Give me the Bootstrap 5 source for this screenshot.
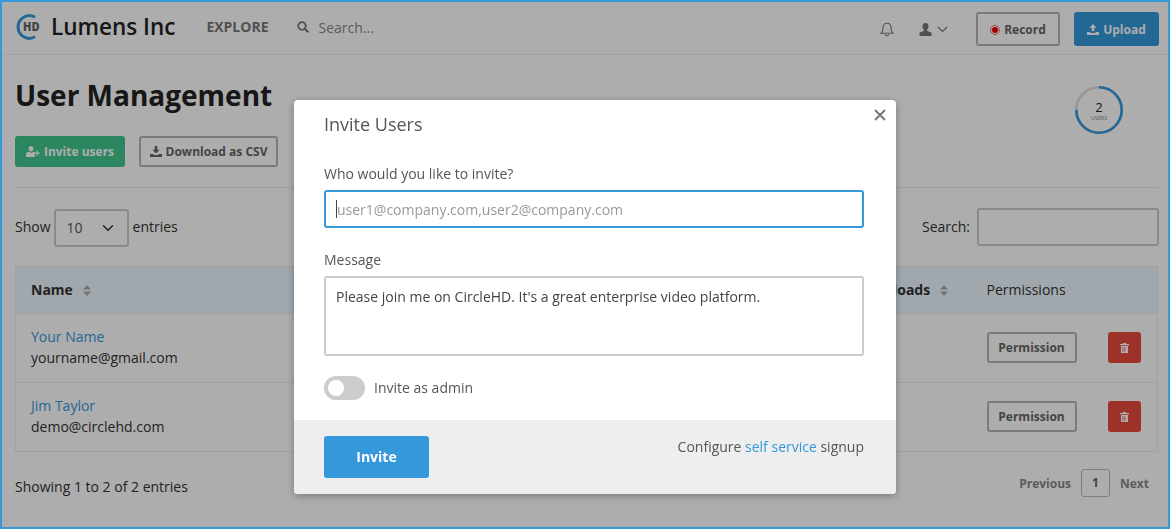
<!DOCTYPE html>
<html lang="en">
<head>
    <meta charset="UTF-8">
    <meta name="viewport" content="width=device-width, initial-scale=1.0">
    <title>User Management</title>
    <link href="https://cdn.jsdelivr.net/npm/bootstrap@5.3.0/dist/css/bootstrap.min.css" rel="stylesheet">
    <style>
        body {
            font-family: "Open Sans", "Liberation Sans", sans-serif;
            font-size: 14px;
            color: #333;
            background: #fff;
            overflow: hidden;
        }
        .app-frame {
            height: 529px;
            border: 2px solid #3498db;
            overflow: hidden;
        }
        .top-bar {
            height: 53px;
            border-bottom: 1px solid #eee;
            padding: 10px 9px 0 13px;
        }
        .brand-name { font-size: 22.5px; font-weight: 600; line-height: 32px; color: #222; margin-left: 10px; margin-top: -1px; }
        .explore-link { font-size: 14px; font-weight: 700; color: #777; margin-left: 31px; margin-top: -1px; }
        .search-icon { margin-left: 28px; margin-top: -1px; }
        .search-hint { font-size: 14px; color: #888; margin-left: 10px; margin-top: 0; }
        .bar-icon { display: block; }
        .btn-line {
            --bs-btn-color: #666;
            --bs-btn-border-color: #b5b5b5;
            --bs-btn-border-width: 2px;
            --bs-btn-font-size: 12px;
            --bs-btn-font-weight: 700;
            --bs-btn-border-radius: 3px;
            --bs-btn-padding-y: 0;
            --bs-btn-padding-x: 0;
            font-family: inherit;
        }
        .btn-solid {
            --bs-btn-color: #fff;
            --bs-btn-border-width: 0;
            --bs-btn-font-size: 12px;
            --bs-btn-font-weight: 700;
            --bs-btn-border-radius: 3px;
            --bs-btn-padding-y: 0;
            --bs-btn-padding-x: 0;
        }
        .btn-record { width: 84px; height: 34px; margin-left: 28px; padding-top: 1px; }
        .btn-upload { width: 85px; height: 34px; margin-left: 14px; padding-top: 1px; --bs-btn-bg: #3498db; --bs-btn-border-color: #3498db; }
        .page-body { padding: 0 9px 0 13px; }
        .page-title { font-size: 28px; font-weight: 700; color: #222; line-height: 38px; margin: 21px 0 0; }
        .users-ring { position: absolute; left: 1072px; top: 83px; width: 50px; height: 50px; }
        .action-row { margin-top: 22px; padding-bottom: 20px; border-bottom: 1px solid #eee; }
        .btn-invite { width: 110px; height: 31px; --bs-btn-bg: #42c78f; --bs-btn-border-color: #42c78f; }
        .btn-csv { width: 139px; height: 31px; margin-left: 14px; --bs-btn-color: #666; }
        .entries-row { margin-top: 20px; height: 38px; }
        .entries-row > span, .entries-row > label { margin-top: -2px; }
        .entries-row > label .entries-search { margin-top: 2px; }
        .entries-select { width: 75px; height: 38px; margin: 2px 4px 0 3px; border: 2px solid #ccc; border-radius: 3px; font-size: 14px; color: #555; padding: 0 0 2px 11px; background-position: right 11px center; }
        .entries-search { width: 182px; height: 38px; margin-left: 7px; border: 2px solid #ccc; border-radius: 3px; }
        .users-table { margin-top: 20px; margin-bottom: 0; border: 1px solid #eee; table-layout: fixed; width: 1143px; font-size: 14px; color: #333; }
        .users-table th, .users-table td { padding: 0 0 1px 15px; vertical-align: middle; border-bottom: 1px solid #eee; }
        .users-table thead th { height: 47px; padding-bottom: 2px; background: #ecf8ff; font-weight: 400; color: #333; }
        .users-table tbody tr { height: 69px; }
        .users-table thead th.sort-head { font-weight: 700; }
        .users-table td.who-cell { padding-bottom: 2px; }
        .sort-mark { display: inline-block; margin-left: 6px; vertical-align: -1px; }
        .user-name { color: #3498db; display: block; line-height: 21px; }
        .user-mail { display: block; line-height: 21px; }
        .btn-perm { width: 90px; height: 31px; padding-top: 1px; }
        .btn-trash { width: 33px; height: 31px; --bs-btn-bg: #e74c3c; --bs-btn-border-color: #e74c3c; margin-left: 31px; }
        .foot-row { margin-top: 17px; height: 28px; padding-right: 10px; }
        .foot-count { padding-top: 6px; }
        .page-link-text { font-size: 12px; font-weight: 700; color: #888; padding-top: 1px; }
        .page-current { width: 29px; height: 28px; margin: 0 10px; border: 1px solid #bbb; border-radius: 3px; font-size: 12px; font-weight: 700; color: #666; }

        .modal-backdrop.dim-layer { top: 2px; left: 2px; right: 2px; bottom: 2px; width: auto; height: auto; background: #000; opacity: .32; }
        .invite-dialog { max-width: 602px; width: 602px; margin: 100px 0 0 294px; }
        .invite-card { border: 0; border-radius: 4px; box-shadow: 0 2px 8px rgba(0,0,0,.3); color: #555; }
        .invite-main { padding: 0 32px 0 30px; height: 320px; }
        .invite-title { font-size: 18px; font-weight: 400; line-height: 24px; margin: 12px 0 0; color: #555; }
        .invite-close { position: absolute; top: 7px; right: 8px; width: 16px; height: 16px; padding: 0; border: 0; background: none; }
        .field-label { font-size: 14px; line-height: 20px; margin: 0 0 6px; color: #555; }
        .who-label { margin-top: 28px; }
        .msg-label { margin-top: 22px; }
        .field-wrap { position: relative; }
        .invite-input, .invite-input:focus { height: 38px; border: 2px solid #3498db; border-radius: 3px; box-shadow: none; font-size: 14px; padding: 0 11px; font-family: inherit; }
        .invite-input::placeholder { color: #999; opacity: 1; }
        .text-caret { position: absolute; left: 12px; top: 10px; width: 1px; height: 18px; background: #444; }
        .invite-area, .invite-area:focus { height: 80px; border: 2px solid #ccc; border-radius: 3px; box-shadow: none; font-size: 14px; padding: 9px 10px; resize: none; color: #444; font-family: inherit; line-height: 20px; }
        .admin-row { margin-top: 20px; }
        .admin-row .form-check-input { width: 41px; height: 24px; margin: 0 10px 0 0; float: none; border: 0; background-color: #ccc; border-radius: 12px; background-size: 24px 24px; background-position: left center; background-image: url("data:image/svg+xml,%3Csvg xmlns='http://www.w3.org/2000/svg' viewBox='0 0 24 24'%3E%3Ccircle cx='12' cy='12' r='8' fill='%23fff'/%3E%3C/svg%3E"); }
        .admin-row.form-switch { padding-left: 0; min-height: 0; margin-bottom: 0; }
        .admin-row .form-check-label { font-size: 14px; color: #555; margin-top: -2px; margin-left: -1px; }
        .invite-foot { height: 74px; background: #eee; padding: 16px 32px 0 30px; border-radius: 0 0 4px 4px; }
        .btn-send { width: 105px; height: 42px; padding-bottom: 2px; --bs-btn-bg: #3498db; --bs-btn-border-color: #3498db; --bs-btn-font-size: 14px; }
        .signup-note { font-size: 14px; color: #555; }
        .signup-note a { color: #3498db; text-decoration: none; }
    </style>
</head>
<body>
    <div class="app-frame position-relative">
        <!-- Top bar -->
        <div class="top-bar d-flex align-items-start">
            <div class="d-flex align-items-center" style="height:30px">
                <svg width="26" height="26" viewBox="0 0 26 26" class="bar-icon">
                    <path d="M20 3.200A11.300 11.300 0 1 0 20 22.800" fill="none" stroke="#3498db" stroke-width="3"/>
                    <text x="8" y="17" font-family="Open Sans, sans-serif" font-size="11.500" font-weight="800" fill="#666" textLength="16.500" lengthAdjust="spacingAndGlyphs">HD</text>
                </svg>
                <span class="brand-name">Lumens Inc</span>
                <span class="explore-link">EXPLORE</span>
                <svg class="search-icon" width="12" height="12" viewBox="0 0 12 12"><circle cx="5" cy="5" r="3.800" fill="none" stroke="#777" stroke-width="1.800"/><path d="M8 8l3.300 3.300" stroke="#777" stroke-width="2"/></svg>
                <span class="search-hint">Search...</span>
            </div>
            <div class="ms-auto d-flex align-items-center">
                <svg width="14" height="15" viewBox="0 0 14 15" class="bar-icon"><path d="M7 1.200c2.600 0 4 2 4 4.300 0 3 .8 4.500 2 5.800H1c1.200-1.300 2-2.800 2-5.800 0-2.300 1.400-4.300 4-4.300zM5.300 12.500a1.800 1.800 0 0 0 3.400 0" fill="none" stroke="#777" stroke-width="1.100"/></svg>
                <svg class="bar-icon" style="margin-left:25px" width="13" height="13" viewBox="0 0 13 13"><path d="M6.500 0c2 0 3 1.500 3 3.300 0 1.500-.7 2.800-1.500 3.400v1.100l4.500 2V13H.5v-3.200l4.500-2V6.700C4.200 6.100 3.500 4.800 3.500 3.300 3.500 1.500 4.500 0 6.500 0z" fill="#777"/></svg>
                <svg class="bar-icon" style="margin-left:5px" width="11" height="7" viewBox="0 0 11 7"><path d="M1 1l4.500 4.500L10 1" fill="none" stroke="#777" stroke-width="1.200"/></svg>
                <button class="btn btn-line btn-record d-flex align-items-center justify-content-center gap-1" type="button">
                    <svg width="10" height="10" viewBox="0 0 10 10"><circle cx="5" cy="5" r="4.500" fill="none" stroke="#e74c3c" stroke-width=".8"/><circle cx="5" cy="5" r="3" fill="#e00"/></svg>Record
                </button>
                <button class="btn btn-solid btn-upload d-flex align-items-center justify-content-center gap-1" type="button">
                    <svg width="12" height="11" viewBox="0 0 12 11"><path d="M6 0l3.500 3.700H7.300V7H4.700V3.700H2.500zM0 8h3.500v1h5V8H12v3H0z" fill="#fff"/></svg>Upload
                </button>
            </div>
        </div>

        <!-- Page -->
        <div class="page-body">
            <h1 class="page-title">User Management</h1>
            <div class="action-row d-flex">
                <button class="btn btn-solid btn-invite d-flex align-items-center justify-content-center gap-1" type="button">
                    <svg width="14" height="11" viewBox="0 0 14 11"><path d="M5 0c1.500 0 2.400 1.100 2.400 2.600S6.500 5.500 5 5.500 2.600 4.100 2.600 2.600 3.500 0 5 0zM0 11V8.300c0-1.500 1.300-2.300 2.600-2.500.7.600 1.500.9 2.400.9s1.700-.3 2.400-.9c.5.100 1 .2 1.400.5V11zM10.500 4.500h1.300v2h2v1.300h-2v2h-1.300v-2h-2V6.500h2z" fill="#fff"/></svg>Invite users
                </button>
                <button class="btn btn-line btn-csv d-flex align-items-center justify-content-center gap-1" type="button">
                    <svg width="12" height="11" viewBox="0 0 12 11"><path d="M4.700 0h2.600v3.700h2.200L6 7.400 2.500 3.700h2.200zM0 8h3.500v1h5V8H12v3H0z" fill="#666"/></svg>Download as CSV
                </button>
            </div>

            <div class="entries-row d-flex align-items-center">
                <span>Show</span>
                <select class="form-select entries-select" aria-label="Entries"><option>10</option></select>
                <span>entries</span>
                <label class="ms-auto d-flex align-items-center">Search:<input class="entries-search form-control" type="text" aria-label="Search"></label>
            </div>

            <table class="table users-table">
                <colgroup><col style="width:430px"><col style="width:413px"><col style="width:113px"><col style="width:121px"><col></colgroup>
                <thead>
                    <tr>
                        <th class="sort-head">Name <svg class="sort-mark" width="8" height="11" viewBox="0 0 8 11"><path d="M4 0l4 4.500H0zM4 11L0 6.500h8z" fill="#aaa"/></svg></th>
                        <th></th>
                        <th class="sort-head">Uploads <svg class="sort-mark" width="8" height="11" viewBox="0 0 8 11"><path d="M4 0l4 4.500H0zM4 11L0 6.500h8z" fill="#aaa"/></svg></th>
                        <th colspan="2">Permissions</th>
                    </tr>
                </thead>
                <tbody>
                    <tr>
                        <td class="who-cell"><a class="user-name text-decoration-none" href="#">Your Name</a><span class="user-mail">yourname@gmail.com</span></td>
                        <td></td><td></td>
                        <td colspan="2"><div class="d-flex">
                            <button class="btn btn-line btn-perm" type="button">Permission</button>
                            <button class="btn btn-solid btn-trash d-flex align-items-center justify-content-center" type="button" aria-label="Delete">
                                <svg width="9" height="10" viewBox="0 0 9 10"><path d="M3 0h3l.5 1H9v1.200H0V1h2.500zM1 3h7v7H1zm1.500 1.200v4.600h.8V4.200zm2 0v4.600h.8V4.200z" fill="#fff" fill-rule="evenodd"/></svg>
                            </button>
                        </div></td>
                    </tr>
                    <tr>
                        <td class="who-cell"><a class="user-name text-decoration-none" href="#">Jim Taylor</a><span class="user-mail">demo@circlehd.com</span></td>
                        <td></td><td></td>
                        <td colspan="2"><div class="d-flex">
                            <button class="btn btn-line btn-perm" type="button">Permission</button>
                            <button class="btn btn-solid btn-trash d-flex align-items-center justify-content-center" type="button" aria-label="Delete">
                                <svg width="9" height="10" viewBox="0 0 9 10"><path d="M3 0h3l.5 1H9v1.200H0V1h2.500zM1 3h7v7H1zm1.500 1.200v4.600h.8V4.200zm2 0v4.600h.8V4.200z" fill="#fff" fill-rule="evenodd"/></svg>
                            </button>
                        </div></td>
                    </tr>
                </tbody>
            </table>

            <div class="foot-row d-flex align-items-center">
                <span class="foot-count">Showing 1 to 2 of 2 entries</span>
                <span class="ms-auto page-link-text">Previous</span>
                <span class="page-current d-flex align-items-center justify-content-center">1</span>
                <span class="page-link-text">Next</span>
            </div>
        </div>

        <!-- Users ring -->
        <div class="users-ring">
            <svg width="50" height="50" viewBox="0 0 50 50">
                <circle cx="25" cy="25" r="22.700" fill="none" stroke="#ddd" stroke-width="2.600"/>
                <path d="M25 2.300A22.700 22.700 0 1 1 2.300 25" fill="none" stroke="#3498db" stroke-width="2.600"/>
                <text x="25" y="27" text-anchor="middle" font-family="Open Sans, sans-serif" font-size="13" fill="#222">2</text>
                <text x="25" y="35" text-anchor="middle" font-family="Open Sans, sans-serif" font-size="5.500" fill="#888">USERS</text>
            </svg>
        </div>
    </div>

    <!-- Invite modal -->
    <div class="modal-backdrop show dim-layer"></div>
    <div class="modal d-block" tabindex="-1">
        <div class="modal-dialog invite-dialog">
            <div class="modal-content invite-card">
                <button class="invite-close" type="button" aria-label="Close">
                    <svg class="bar-icon" width="16" height="16" viewBox="0 0 16 16"><path d="M3 3l10 10M13 3L3 13" stroke="#777" stroke-width="2"/></svg>
                </button>
                <div class="invite-main">
                    <h5 class="invite-title">Invite Users</h5>
                    <p class="field-label who-label">Who would you like to invite?</p>
                    <div class="field-wrap">
                        <input class="form-control invite-input" type="text" placeholder="user1@company.com,user2@company.com">
                        <span class="text-caret"></span>
                    </div>
                    <p class="field-label msg-label">Message</p>
                    <textarea class="form-control invite-area">Please join me on CircleHD. It's a great enterprise video platform.</textarea>
                    <div class="admin-row form-check form-switch d-flex align-items-center">
                        <input class="form-check-input" type="checkbox" id="asAdmin">
                        <label class="form-check-label" for="asAdmin">Invite as admin</label>
                    </div>
                </div>
                <div class="invite-foot d-flex justify-content-between align-items-start">
                    <button class="btn btn-solid btn-send" type="button">Invite</button>
                    <span class="signup-note">Configure <a href="#">self service</a> signup</span>
                </div>
            </div>
        </div>
    </div>

    <script src="https://cdn.jsdelivr.net/npm/bootstrap@5.3.0/dist/js/bootstrap.bundle.min.js"></script>
</body>
</html>
